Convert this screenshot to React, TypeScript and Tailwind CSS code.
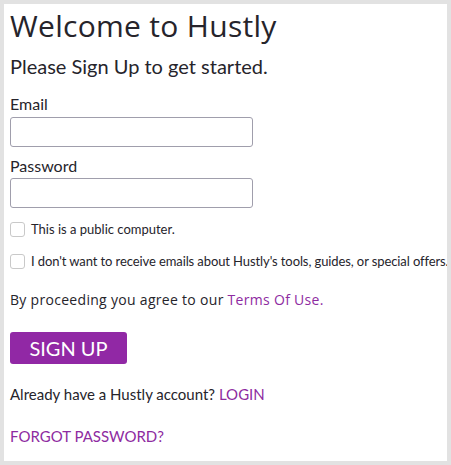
import React from 'react';

export default function App() {
  return (
    <div className="w-[451px] h-[465px] bg-[#e2e2e2] p-[4px] overflow-hidden">
      <div className="w-[443px] h-[457px] bg-white overflow-hidden pl-[6px] text-[#26242b] font-['Lato',sans-serif]">
        <h1 className="pt-[3px] text-[30px] leading-[38px] font-['Open_Sans',sans-serif] tracking-[0.3px]">Welcome to Hustly</h1>
        <p className="mt-[9px] text-[20px] leading-[24px]">Please Sign Up to get started.</p>

        <label className="block mt-[16px] text-[16px] leading-[20px]">Email</label>
        <input type="text" className="block mt-[3px] w-[243px] h-[30px] border border-[#a09eac] rounded-[3px]" />

        <label className="block mt-[9px] text-[16px] leading-[20px]">Password</label>
        <input type="password" className="block mt-[2px] w-[243px] h-[30px] border border-[#a09eac] rounded-[3px]" />

        <div className="mt-[13px] flex items-center gap-[6px] whitespace-nowrap">
          <span className="w-[15px] h-[15px] border border-[#c9c9c9] rounded-[3px] shrink-0" />
          <span className="text-[13px] leading-[16px]">This is a public computer.</span>
        </div>
        <div className="mt-[16px] flex items-center gap-[6px] whitespace-nowrap">
          <span className="w-[15px] h-[15px] border border-[#c9c9c9] rounded-[3px] shrink-0" />
          <span className="text-[13px] leading-[16px] tracking-[-0.1px]">I don't want to receive emails about Hustly's tools, guides, or special offers.</span>
        </div>

        <p className="mt-[23px] text-[14px] leading-[16px] tracking-[0.3px] font-['Open_Sans',sans-serif]">
          By proceeding you agree to our <span className="text-[#8e2ba1]">Terms Of Use.</span>
        </p>

        <button className="mt-[24px] w-[117px] h-[32px] bg-[#9128a5] rounded-[3px] text-white text-[20px] leading-[24px]">SIGN UP</button>

        <p className="mt-[20px] text-[15px] leading-[20px]">
          Already have a Hustly account? <span className="text-[#8e2ba1]">LOGIN</span>
        </p>
        <p className="mt-[22px] text-[15px] leading-[20px] text-[#8e2ba1]">FORGOT PASSWORD?</p>
      </div>
    </div>
  );
}
